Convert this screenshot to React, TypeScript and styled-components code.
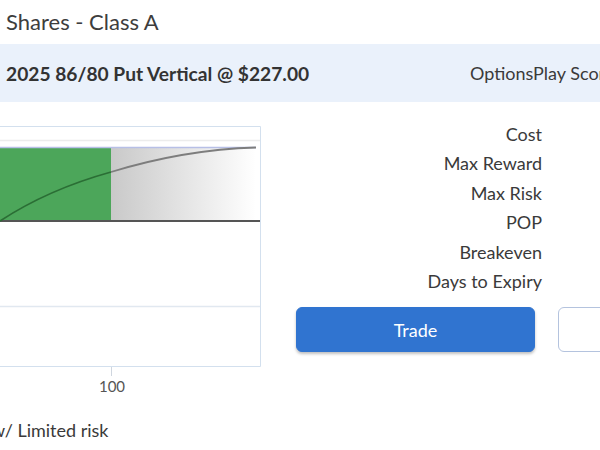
import React from "react";
import styled, { createGlobalStyle } from "styled-components";

const GlobalStyle = createGlobalStyle`
  html, body {
    margin: 0;
    padding: 0;
    background: #ffffff;
  }
  body {
    font-family: Lato, "Open Sans", "Liberation Sans", sans-serif;
    color: #3a3a3a;
  }
`;

const Page = styled.div`
  width: 600px;
  height: 450px;
  overflow: hidden;
  position: relative;
`;

const Title = styled.div`
  height: 44px;
  padding-left: 6px;
  font-size: 22px;
  line-height: 44px;
  color: #3d3d3d;
  white-space: nowrap;
`;

const Band = styled.div`
  height: 58px;
  background: #eaf1fb;
  display: flex;
  align-items: center;
  white-space: nowrap;
  overflow: hidden;
`;

const StrategyName = styled.div`
  padding-left: 6px;
  font-size: 19.2px;
  font-weight: 700;
  color: #333;
  width: 464px;
  flex-shrink: 0;
`;

const Score = styled.div`
  font-size: 18px;
  color: #3a3a3a;
`;

const Body = styled.div`
  display: grid;
  grid-template-columns: 296px 1fr;
  padding-top: 17px;
`;

const ChartWrap = styled.div`
  padding-top: 7px;
  height: 280px;
`;

const Side = styled.div`
  display: flex;
  flex-direction: column;
`;

const Stats = styled.div`
  width: 246px;
  display: flex;
  flex-direction: column;
  align-items: flex-end;
  padding-top: 1px;
`;

const StatLabel = styled.div`
  font-size: 18px;
  line-height: 29.4px;
  color: #3a3a3a;
`;

const Actions = styled.div`
  display: grid;
  grid-template-columns: 239px 239px;
  gap: 23px;
  margin-top: 11px;
`;

const Button = styled.button<{ $primary?: boolean }>`
  height: 45px;
  border-radius: 6px;
  font-family: inherit;
  font-size: 18px;
  cursor: pointer;
  border: 1px solid ${(p) => (p.$primary ? "#3074d0" : "#b4c3de")};
  background: ${(p) => (p.$primary ? "#3074d0" : "#ffffff")};
  color: ${(p) => (p.$primary ? "#ffffff" : "#3074d0")};
  box-shadow: ${(p) => (p.$primary ? "0 2px 3px rgba(0,0,0,0.25)" : "none")};
`;

const Footer = styled.div`
  font-size: 18px;
  line-height: 24px;
  margin-top: 12px;
  margin-left: -9px;
  color: #3a3a3a;
`;

const stats = ["Cost", "Max Reward", "Max Risk", "POP", "Breakeven", "Days to Expiry"];

const PayoffChart: React.FC = () => (
  <svg width="262" height="272" viewBox="0 0 262 272">
    <defs>
      <linearGradient id="loss" x1="0" x2="1" y1="0" y2="0">
        <stop offset="0" stopColor="#c9c9c9" />
        <stop offset="1" stopColor="#ffffff" />
      </linearGradient>
    </defs>
    {/* frame */}
    <path d="M0 0.5 H260.5 V240.5 H0" fill="none" stroke="#d3e0ee" strokeWidth="1" />
    <line x1="0" x2="260" y1="14.5" y2="14.5" stroke="#ececec" strokeWidth="1.5" />
    {/* zones */}
    <rect x="0" y="21" width="111" height="74" fill="#4ca65a" />
    <rect x="111" y="21" width="145" height="74" fill="url(#loss)" />
    <line x1="0" x2="256" y1="21.5" y2="21.5" stroke="#b7bfe6" strokeWidth="1.5" />
    <line x1="0" x2="260" y1="95" y2="95" stroke="#555" strokeWidth="2" />
    {/* payoff curve */}
    <path d="M0 95 C 35 72, 75 56, 111 46" fill="none" stroke="#2b6e35" strokeWidth="1.6" />
    <path d="M111 46 C 160 31, 205 23, 256 21.5" fill="none" stroke="#7d7d7d" strokeWidth="1.8" />
    <line x1="0" x2="260" y1="180.5" y2="180.5" stroke="#e1e8f0" strokeWidth="1.5" />
    {/* axis */}
    <line x1="111.5" x2="111.5" y1="241" y2="250" stroke="#cfd6df" strokeWidth="1" />
    <text x="112" y="266" textAnchor="middle" fontSize="15" fill="#555" fontFamily="Lato, sans-serif">
      100
    </text>
  </svg>
);

const App: React.FC = () => {
  return (
    <Page>
      <GlobalStyle />
      <Title>Shares - Class A</Title>
      <Band>
        <StrategyName>2025 86/80 Put Vertical @ $227.00</StrategyName>
        <Score>OptionsPlay Score</Score>
      </Band>
      <Body>
        <ChartWrap>
          <PayoffChart />
        </ChartWrap>
        <Side>
          <Stats>
            {stats.map((s) => (
              <StatLabel key={s}>{s}</StatLabel>
            ))}
          </Stats>
          <Actions>
            <Button $primary>Trade</Button>
            <Button>Save</Button>
          </Actions>
        </Side>
      </Body>
      <Footer>w/ Limited risk</Footer>
    </Page>
  );
};

export default App;
